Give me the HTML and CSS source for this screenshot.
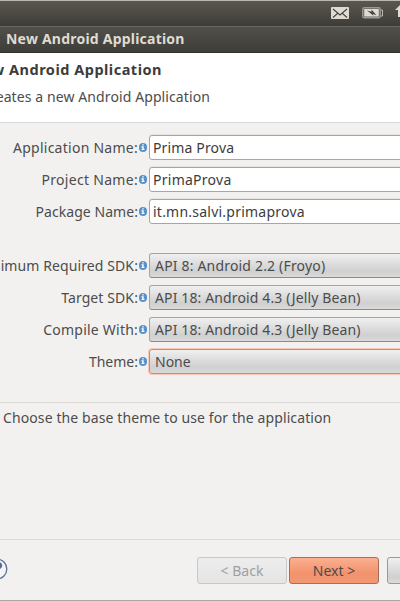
FILE: index.html
```html
<!DOCTYPE html>
<html lang="en">
<head>
    <meta charset="UTF-8">
    <meta name="viewport" content="width=device-width, initial-scale=1.0">
    <title>New Android Application</title>
    <link rel="stylesheet" href="styles.css">
</head>
<body>
    <!-- info icon used next to every label -->
    <svg class="defs" width="0" height="0">
        <symbol id="info" viewBox="0 0 8 9">
            <rect x="0.5" y="0.5" width="7" height="8" rx="3" fill="#5b93c9" stroke="#4280b8" stroke-width="0.8"/>
            <path d="M3.300 1.300h1.400v1.200H3.300zM2.500 3.300h2.200v2.700h.8v1.100h-3V6h.8V4.400h-.8z" fill="#fff"/>
        </symbol>
    </svg>
    <div class="window">
        <div class="panel">
            <svg class="mail" width="18" height="13" viewBox="0 0 18 13">
                <rect x="0" y="0" width="18" height="12" rx="1" fill="#dfdbd2"/>
                <path d="M2 2l7 6 7-6M2 10.5l4.5-4M16 10.5l-4.5-4" fill="none" stroke="#44433c" stroke-width="1.1"/>
            </svg>
            <svg class="battery" width="21" height="12" viewBox="0 0 21 12">
                <rect x="0.8" y="0.8" width="17.4" height="10" rx="1.6" fill="none" stroke="#9d9a91" stroke-width="1.5"/>
                <rect x="2.2" y="2" width="14.6" height="7.600" fill="#dfdbd2"/>
                <path d="M19 3h1.5v6H19" fill="none" stroke="#bab6ad" stroke-width="1"/>
                <path d="M5 3.500l4.500 1.300V2.500l5 5.800-3.500-1.300.5 1.800z" fill="#44433c"/>
            </svg>
            <svg class="network" width="5" height="13" viewBox="0 0 5 13">
                <path d="M5 0L0 5h3v7h2z" fill="#dfdbd2"/>
            </svg>
        </div>
        <div class="titlebar"><span>New Android Application</span></div>
        <div class="header">
            <h1><span>New Android Application</span></h1>
            <p><span>Creates a new Android Application</span></p>
        </div>
        <div class="form">
            <div class="row">
                <label class="l-app">Application Name:</label>
                <svg class="info"><use href="#info"/></svg>
                <div class="input"><span class="v-app">Prima Prova</span></div>
            </div>
            <div class="row">
                <label class="l-project">Project Name:</label>
                <svg class="info"><use href="#info"/></svg>
                <div class="input"><span class="v-project">PrimaProva</span></div>
            </div>
            <div class="row">
                <label class="l-package">Package Name:</label>
                <svg class="info"><use href="#info"/></svg>
                <div class="input"><span class="v-package">it.mn.salvi.primaprova</span></div>
            </div>
            <div class="row first-select">
                <label class="l-min">Minimum Required SDK:</label>
                <svg class="info"><use href="#info"/></svg>
                <div class="select"><span class="v-froyo">API 8: Android 2.2 (Froyo)</span></div>
            </div>
            <div class="row">
                <label class="l-target">Target SDK:</label>
                <svg class="info"><use href="#info"/></svg>
                <div class="select"><span class="v-jelly">API 18: Android 4.3 (Jelly Bean)</span></div>
            </div>
            <div class="row">
                <label class="l-compile">Compile With:</label>
                <svg class="info"><use href="#info"/></svg>
                <div class="select"><span class="v-jelly">API 18: Android 4.3 (Jelly Bean)</span></div>
            </div>
            <div class="row">
                <label class="l-theme">Theme:</label>
                <svg class="info"><use href="#info"/></svg>
                <div class="select focused"><span>None</span></div>
            </div>
        </div>
        <div class="hint"><span>Choose the base theme to use for the application</span></div>
        <div class="footer">
            <svg class="help" width="22" height="22" viewBox="0 0 22 22">
                <circle cx="11" cy="11" r="9.8" fill="#f4f5f8" stroke="#5f7093" stroke-width="1.3"/>
                <path d="M8 7.5c.5-3 7-3 7 .2 0 2-3.500 2-3.500 5.300M11.500 15v2" fill="none" stroke="#5b6c96" stroke-width="2.600"/>
            </svg>
            <button class="btn back"><span>&lt; Back</span></button>
            <button class="btn next"><span>Next &gt;</span></button>
            <button class="btn cancel"></button>
        </div>
    </div>
</body>
</html>
```
FILE: styles.css
```css
*{
    margin: 0;
    padding: 0;
    box-sizing: border-box;
}
body{
    font-family: "Noto Sans", "Open Sans", sans-serif;
    font-size: 14px;
    color: #4c4c4c;
    overflow: hidden;
}
.defs{
    display: block;
}
.window{
    width: 400px;
    height: 601px;
    overflow: hidden;
    white-space: nowrap;
    display: flex;
    flex-direction: column;
    background-color: #f2f1f0;
    border-bottom: 1px solid #aea79f;
}
.panel{
    height: 26px;
    flex: none;
    display: flex;
    align-items: flex-start;
    padding: 6px 0 0 331px;
    border-top: 1px solid #b9b8b4;
    background: linear-gradient(#5a584d, #3d3c38);
}
.panel svg{
    flex: none;
}
.battery{
    margin-left: 13px;
}
.network{
    margin: -2px 0 0 12px;
}
.titlebar{
    height: 27px;
    flex: none;
    padding-left: 6px;
    line-height: 23px;
    font-weight: bold;
    letter-spacing: 0.22px;
    color: #dfdbd2;
    border-top: 1px solid #686760;
    border-bottom: 1px solid #33312d;
    background: linear-gradient(#504f49, #3e3d39);
}
.header{
    height: 70px;
    flex: none;
    background-color: #fff;
    border-bottom: 1px solid #d9d8d7;
}
.header h1,
.header p{
    display: flex;
    justify-content: flex-end;
    font-size: 14px;
    line-height: 20px;
}
.header h1{
    width: 162px;
    padding-top: 6px;
    font-size: 14.5px;
    letter-spacing: 0.5px;
    color: #3c3c3c;
}
.header p{
    width: 210px;
    padding-top: 8px;
    letter-spacing: 0.1px;
}
.form{
    height: 280px;
    flex: none;
    padding-top: 12px;
    border-bottom: 1px solid #dad9d8;
}
.row{
    display: flex;
    height: 25px;
    margin-bottom: 7px;
}
.first-select{
    margin-top: 29px;
}
.row label{
    width: 138px;
    flex: none;
    display: flex;
    justify-content: flex-end;
    line-height: 25px;
}
.row .l-app{
    letter-spacing: 0.26px;
}
.row .l-project{
    letter-spacing: 0.3px;
}
.row .l-package{
    letter-spacing: 0.06px;
}
.row .l-min,
.row .l-target{
    letter-spacing: 0.1px;
}
.row .l-compile{
    letter-spacing: 0.22px;
}
.v-app{
    letter-spacing: 0.15px;
}
.v-project{
    letter-spacing: 0.26px;
}
.v-package{
    letter-spacing: 0.23px;
}
.v-froyo{
    letter-spacing: 0.18px;
}
.v-jelly{
    letter-spacing: 0.13px;
}
.info{
    width: 8px;
    height: 9px;
    flex: none;
    margin: 8px 2.5px 0 0.5px;
}
.input,
.select{
    width: 270px;
    flex: none;
    line-height: 23px;
    border-radius: 3px;
}
.input{
    padding-left: 3px;
    color: #3c3c3c;
    background-color: #fff;
    border: 1px solid #aaa69f;
    box-shadow: 0 -1px 0 #e4e3e1;
}
.select{
    padding-left: 5px;
    border: 1px solid #a3a3a3;
    border-bottom-color: #8a8a8a;
    background: linear-gradient(#f0f0f0, #dedede 40%, #d0d0d0 75%, #dadada);
}
.focused{
    border-color: #e9805a;
    box-shadow: 0 0 0 1px #f6c9b7;
}
.hint{
    height: 137px;
    flex: none;
    padding: 5px 0 0 3px;
    line-height: 20px;
    letter-spacing: 0.1px;
    border-bottom: 1px solid #d9d8d7;
}
.footer{
    display: flex;
    padding-top: 17px;
}
.help{
    flex: none;
    margin: 1px 0 0 -14px;
}
.btn{
    width: 90px;
    height: 27px;
    flex: none;
    font: inherit;
    line-height: 25px;
    color: #4c4c4c;
    border: 1px solid #999;
    border-radius: 3px;
}
.back{
    margin-left: 189px;
    color: #a0a0a0;
    border-color: #c8c8c8;
    background: linear-gradient(#ededed, #e4e4e4);
}
.next{
    margin-left: 2px;
    border-color: #a66e5a;
    background: linear-gradient(#fbaf91, #f2936d 60%, #f29872);
}
.cancel{
    margin-left: 8px;
    background: linear-gradient(#f0f0f0, #d0d0d0 75%, #dadada);
}
```
